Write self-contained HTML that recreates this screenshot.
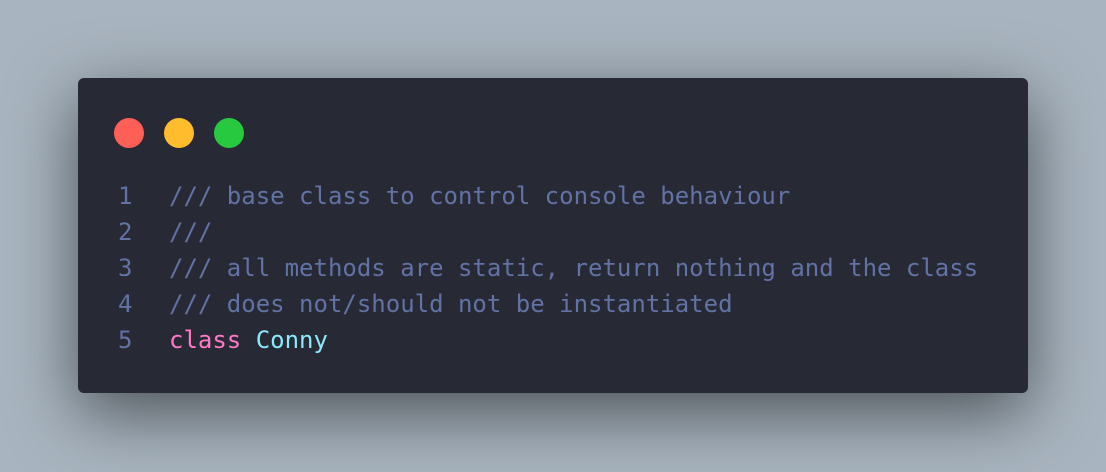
<!DOCTYPE html>
<html><head><meta charset="utf-8"><style>
html,body{margin:0;padding:0;width:1106px;height:472px;overflow:hidden;background:#a8b4bf;}
.win{position:absolute;left:78px;top:78px;width:950px;height:315px;background:#272935;border-radius:6px;box-shadow:0 20px 68px rgba(0,0,0,0.55);}
.dot{position:absolute;top:40px;width:30px;height:30px;border-radius:50%;}
pre{position:absolute;left:34px;top:100px;margin:0;font-family:"DejaVu Sans Mono","Liberation Mono",monospace;font-size:24px;line-height:36px;color:#6272a4;}
.n{display:inline-block;width:51px;padding-left:6px;color:#6272a4;}
.k{color:#ff79c6}.c{color:#8be9fd}
</style></head><body>
<div class="win">
<div class="dot" style="left:36px;background:#ff5f56"></div>
<div class="dot" style="left:86px;background:#ffbd2e"></div>
<div class="dot" style="left:136px;background:#27c93f"></div>
<pre><span class="n">1</span>/// base class to control console behaviour
<span class="n">2</span>///
<span class="n">3</span>/// all methods are static, return nothing and the class
<span class="n">4</span>/// does not/should not be instantiated
<span class="n">5</span><span class="k">class</span> <span class="c">Conny</span></pre>
</div>
</body></html>
